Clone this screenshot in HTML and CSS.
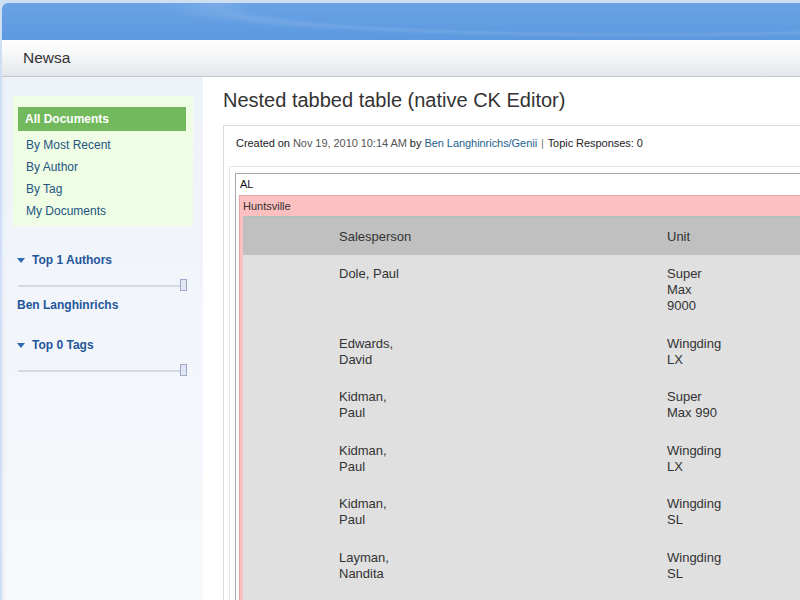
FILE: index.html
```html
<!DOCTYPE html>
<html>
<head>
<meta charset="utf-8">
<title>Newsa</title>
<link rel="stylesheet" href="styles.css">
</head>
<body>
<div class="page">
  <div class="banner"></div>
  <div class="titlebar">Newsa</div>
  <div class="layout">
    <aside class="sidebar">
      <div class="navbox">
        <div class="nav-head">All Documents</div>
        <a class="nav-link">By Most Recent</a>
        <a class="nav-link">By Author</a>
        <a class="nav-link">By Tag</a>
        <a class="nav-link">My Documents</a>
      </div>
      <div class="section authors">
        <div class="sec-head"><span class="tri"></span>Top 1 Authors</div>
        <div class="slider"><span class="thumb"></span></div>
        <div class="author">Ben Langhinrichs</div>
      </div>
      <div class="section tags">
        <div class="sec-head"><span class="tri"></span>Top 0 Tags</div>
        <div class="slider"><span class="thumb"></span></div>
      </div>
    </aside>
    <main class="main">
      <h1 class="title">Nested tabbed table (native CK Editor)</h1>
      <div class="doc">
        <div class="meta">Created on <span class="date">Nov 19, 2010 10:14 AM</span> by <a class="who">Ben Langhinrichs/Genii</a> <span class="sep">|</span> Topic Responses: 0</div>
        <div class="inner">
          <div class="state">
            <div class="state-name">AL</div>
            <div class="city">
              <div class="city-name">Huntsville</div>
              <div class="grid">
                <div class="row head">
                  <div></div><div>Salesperson</div><div></div><div>Unit</div><div></div>
                </div>
                <div class="row">
                  <div></div><div>Dole, Paul</div><div></div><div>Super Max 9000</div><div></div>
                </div>
                <div class="row">
                  <div></div><div>Edwards, David</div><div></div><div>Wingding LX</div><div></div>
                </div>
                <div class="row">
                  <div></div><div>Kidman, Paul</div><div></div><div>Super Max 990</div><div></div>
                </div>
                <div class="row">
                  <div></div><div>Kidman, Paul</div><div></div><div>Wingding LX</div><div></div>
                </div>
                <div class="row">
                  <div></div><div>Kidman, Paul</div><div></div><div>Wingding SL</div><div></div>
                </div>
                <div class="row">
                  <div></div><div>Layman, Nandita</div><div></div><div>Wingding SL</div><div></div>
                </div>
              </div>
            </div>
          </div>
        </div>
      </div>
    </main>
  </div>
</div>
</body>
</html>
```
FILE: styles.css
```css
html, body {
  margin: 0;
  padding: 0;
  height: 100%;
  overflow: hidden;
}
body {
  font-family: "Liberation Sans", Arial, sans-serif;
  background: #cfdff3;
  color: #333;
}
.page {
  padding: 3px 0 0 2px;
  height: 100%;
  box-sizing: border-box;
  display: flex;
  flex-direction: column;
}
.banner {
  height: 37px;
  border-top-left-radius: 6px;
  background:
    radial-gradient(ellipse 560px 36px at 640px 4px, rgba(255,255,255,0) 70%, rgba(255,255,255,0.10) 76%, rgba(255,255,255,0) 86%),
    linear-gradient(#6aa2e5, #5c99df);
}
.titlebar {
  height: 36px;
  line-height: 36px;
  padding-left: 21px;
  font-size: 15.5px;
  color: #333;
  background: linear-gradient(#ffffff 0%, #f6f7f8 40%, #e3e6ea 100%);
  border-bottom: 1px solid #c3c8ce;
}
.layout {
  flex: 1;
  display: flex;
  min-height: 0;
}
.sidebar {
  width: 201px;
  flex: none;
  background: linear-gradient(#eef2f9, #f7f9fc);
  box-shadow: inset 6px 0 4px -4px #e6edf7;
}
.navbox {
  margin: 19px 0 0 11px;
  width: 180px;
  box-sizing: border-box;
  padding: 11px 7px 4px 5px;
  background: #effde5;
}
.nav-head {
  height: 24px;
  line-height: 24px;
  background: #72b85c;
  color: #fff;
  font-weight: bold;
  font-size: 12px;
  padding-left: 7px;
}
.nav-link {
  display: block;
  font-size: 12px;
  line-height: 22px;
  padding-left: 8px;
  color: #235582;
}
.nav-head + .nav-link {
  margin-top: 3px;
}
.section {
  padding-left: 15px;
}
.authors {
  margin-top: 25px;
}
.tags {
  margin-top: 23px;
}
.sec-head {
  font-size: 12px;
  font-weight: bold;
  color: #24569a;
  line-height: 18px;
  display: flex;
  align-items: center;
}
.tri {
  width: 0;
  height: 0;
  border-left: 4px solid transparent;
  border-right: 4px solid transparent;
  border-top: 5px solid #2e6ab2;
  margin-right: 7px;
  margin-top: 1px;
}
.slider {
  position: relative;
  width: 164px;
  height: 2px;
  margin: 16px 0 0 1px;
  background: #d6dade;
}
.thumb {
  position: absolute;
  left: 162px;
  top: -6px;
  width: 5px;
  height: 10px;
  border: 1px solid #9ea8cc;
  background: #e2e6f2;
}
.author {
  margin-top: 10px;
  font-size: 12px;
  font-weight: bold;
  color: #24569a;
  line-height: 16px;
}
.main {
  flex: 1;
  background: #fff;
  padding-left: 20px;
  min-width: 0;
  overflow: hidden;
}
.title {
  margin: 11px 0 0 0;
  font-size: 20px;
  line-height: 24px;
  font-weight: normal;
  color: #333;
  white-space: nowrap;
}
.doc {
  margin-top: 13px;
  border: 1px solid #dcdcdc;
  border-right: none;
  width: 700px;
  padding: 10px 0 0 5px;
}
.meta {
  font-size: 11px;
  line-height: 14px;
  color: #222;
  padding-left: 7px;
  white-space: nowrap;
  letter-spacing: -0.05px;
}
.date {
  color: #555;
}
.who {
  color: #1d5f8f;
}
.sep {
  color: #777;
  padding: 0 1px;
}
.inner {
  margin-top: 16px;
  border: 1px solid #e6e6e6;
  border-right: none;
  border-bottom: none;
  padding: 6px 0 0 5px;
}
.state {
  border: 1px solid #a8a8a8;
  border-right: none;
  border-bottom: none;
  padding: 3px 0 0 3px;
}
.state-name {
  font-size: 11px;
  line-height: 14px;
  color: #111;
  padding-left: 1px;
}
.city {
  margin-top: 4px;
  border: 1px solid #e4a6a6;
  border-right: none;
  border-bottom: none;
  background: #fcc0c0;
  padding: 3px 0 0 3px;
}
.city-name {
  font-size: 11px;
  line-height: 14px;
  color: #333;
  padding-left: 0;
}
.grid {
  margin-top: 3px;
  border-top: 1px solid #aac2c2;
  font-size: 13px;
  line-height: 16px;
  color: #333;
  background: #e0e0e0;
  height: 600px;
}
.row {
  display: grid;
  grid-template-columns: 96px 72px 256px 55px 1fr;
  background: #e0e0e0;
  padding: 11px 0 10.6px 0;
}
.row.head {
  background: #c0c0c0;
  padding: 12px 0 10px 0;
}
```
